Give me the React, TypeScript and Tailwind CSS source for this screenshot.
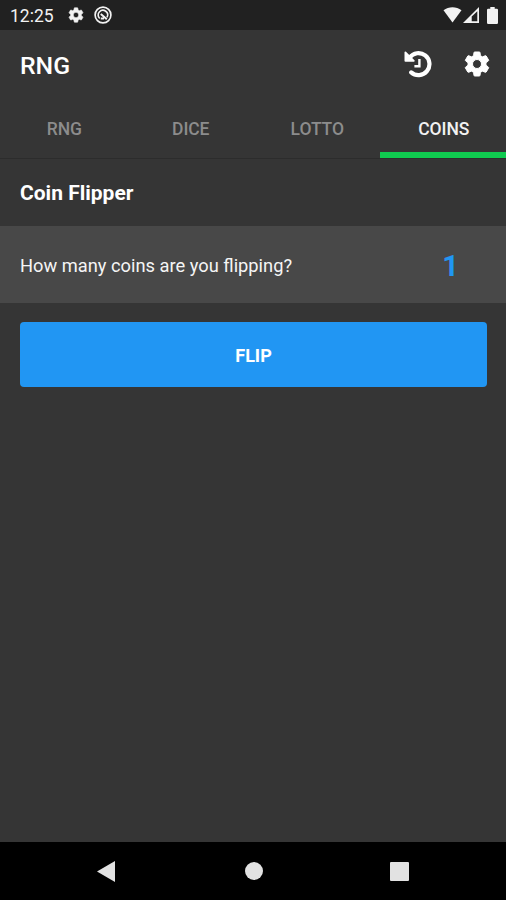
import { useState } from 'react'
import { MdSettings } from 'react-icons/md'

const TABS = ['RNG', 'DICE', 'LOTTO', 'COINS'] as const

type Tab = (typeof TABS)[number]

const HistoryIcon = () => (
  <svg width="28" height="28" viewBox="0 0 28 28" fill="none" aria-hidden>
    <path
      d="M5.6 7.6A11 11 0 1 1 7.2 22.4"
      stroke="currentColor"
      strokeWidth="4.2"
      strokeLinecap="round"
    />
    <path
      d="M1.4 2.4V10.8H9.8Z"
      fill="currentColor"
      stroke="currentColor"
      strokeWidth="1.8"
      strokeLinejoin="round"
    />
    <path d="M15.4 9V16.2H10.4" stroke="currentColor" strokeWidth="2.4" />
  </svg>
)

// The first path of the Material icon is its empty bounding box, so only the
// gear itself gets the extra weight.
const GearIcon = ({ size }: { size: number }) => (
  <MdSettings size={size} className="[&>path:last-child]:stroke-[0.8px]" />
)

const StatusBar = () => (
  <div className="flex h-[30px] items-center bg-[#212121] pr-[8px] pl-[10px] text-[#f2f2f2]">
    <span className="w-[57px] pt-[2px] text-[17.5px] leading-[28px]">12:25</span>
    <GearIcon size={18} />
    <svg className="ml-[9px]" width="18" height="18" viewBox="0 0 18 18" fill="none" aria-hidden>
      <circle cx="9" cy="9" r="7.9" stroke="currentColor" strokeWidth="1.7" />
      <path
        d="M5.7 12.5A4.7 4.7 0 0 1 5.5 5.7A4.7 4.7 0 0 1 12.9 11.4"
        stroke="currentColor"
        strokeWidth="1.6"
      />
      <path d="M6.8 8L12.8 13.2M6.8 12.6H10" stroke="currentColor" strokeWidth="2" />
    </svg>
    <div className="ml-auto flex items-center">
      <svg width="19" height="16" viewBox="0 0 19 16" fill="currentColor" aria-hidden>
        <path d="M0.5 3.2C5.7-.7 13.3-.7 18.5 3.2L9.5 15.5Z" />
      </svg>
      <svg className="ml-px" width="17" height="16" viewBox="0 0 17 16" aria-hidden>
        <path d="M0 16L16 0V16Z" fill="currentColor" />
        <path d="M8.7 9.5L14.3 4.3V14.2H8.7Z" fill="#212121" />
      </svg>
      <svg className="ml-[7px]" width="11" height="17" viewBox="0 0 11 17" fill="currentColor" aria-hidden>
        <path d="M3.3 0H7.7V1.8H9.8Q11 1.8 11 3V15.8Q11 17 9.8 17H1.2Q0 17 0 15.8V3Q0 1.8 1.2 1.8H3.3Z" />
      </svg>
    </div>
  </div>
)

const NavigationBar = () => (
  <div className="grid h-[58px] grid-cols-3 items-center bg-black px-[34px] text-[#e2e2e2]">
    <button className="flex justify-center pr-[2px]" aria-label="Back">
      <svg width="18" height="21" viewBox="0 0 18 21" fill="currentColor">
        <path d="M0 10.5L18 0V21Z" />
      </svg>
    </button>
    <button className="flex justify-center pl-px" aria-label="Home">
      <span className="size-[18px] rounded-full bg-[#e2e2e2]" />
    </button>
    <button className="flex justify-center" aria-label="Recent apps">
      <span className="size-[19px] rounded-[1px] bg-[#e2e2e2]" />
    </button>
  </div>
)

export default function App() {
  const [tab, setTab] = useState<Tab>('COINS')

  return (
    <div className="flex h-[900px] w-[506px] flex-col overflow-hidden bg-[#353535] font-['Roboto',sans-serif] text-white">
      <StatusBar />
      <header className="flex h-[70px] items-center pr-[14px] pl-[20px]">
        <h1 className="pt-[2px] text-[24.8px] font-medium">RNG</h1>
        <div className="ml-auto flex items-center gap-[30px] pb-[2px]">
          <button aria-label="History">
            <HistoryIcon />
          </button>
          <button aria-label="Settings">
            <GearIcon size={30} />
          </button>
        </div>
      </header>
      <nav className="grid h-[59px] grid-cols-4 border-b border-[#2c2c2c]">
        {TABS.map((name) => (
          <button
            key={name}
            onClick={() => setTab(name)}
            className={`border-b-[6px] pt-[6px] pl-[2px] text-[17.5px] font-medium tracking-[-0.1px] ${
              tab === name
                ? 'border-[#10cb50] text-[#f2f2f2]'
                : 'border-transparent text-[#8c8c8c]'
            }`}
          >
            {name}
          </button>
        ))}
      </nav>
      <main className="flex-1">
        <h2 className="flex h-[67px] items-center px-[20px] pt-[2px] text-[21px] font-bold">
          Coin Flipper
        </h2>
        <div className="flex h-[77px] items-center bg-[#484848] pt-[4px] pr-[47px] pl-[20px]">
          <span className="pb-[2px] text-[18.3px] text-[#f5f5f5]">How many coins are you flipping?</span>
          <span className="ml-auto text-[29px] font-bold text-[#2196f3]">1</span>
        </div>
        <div className="pt-[19px] pr-[19px] pl-[20px]">
          <button className="h-[65px] w-full rounded-[4px] bg-[#2196f3] pt-[2px] text-[18px] font-bold">
            FLIP
          </button>
        </div>
      </main>
      <NavigationBar />
    </div>
  )
}
